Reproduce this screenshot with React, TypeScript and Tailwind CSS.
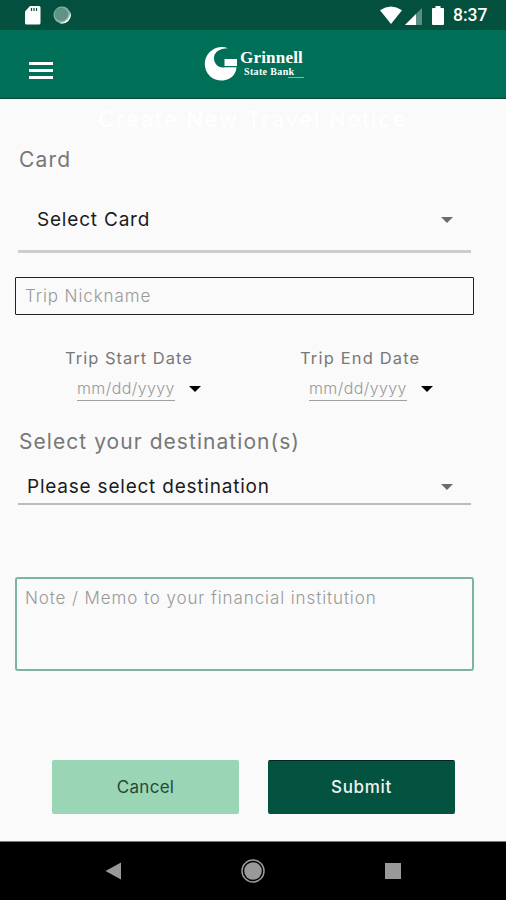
import React, { useState } from "react";

type SelectRowProps = {
    label: string;
    className: string;
};

type DateFieldProps = {
    label: string;
    className: string;
    labelClassName: string;
    value: string;
    onChange: (value: string) => void;
};

const Caret = ({ className }: { className: string }) => (
    <svg viewBox="0 0 12 6" className={`h-[6px] w-3 shrink-0 ${className}`} fill="currentColor">
        <path d="M0 0h12L6 6z" />
    </svg>
);

const StatusBar = () => (
    <div className="flex h-[30px] items-center bg-[#04503f] pl-6 pr-[18px] text-white">
        {/* SD card */}
        <svg viewBox="0 0 17 20" className="h-5 w-[17px]">
            <path d="M6 1h9q1.500 0 1.500 1.500v15.500q0 1.500-1.500 1.500h-12.500q-1.500 0-1.500-1.500v-11.500z" fill="white" />
            <path d="M7.500 3v3M10 3v3M12.500 3v3" stroke="#04503f" strokeWidth="1.200" />
        </svg>
        <svg viewBox="0 0 18 18" className="ml-3 h-[18px] w-[18px]">
            <circle cx="9" cy="9" r="8.500" fill="#8db5a9" />
            <path d="M17.300 6a8.600 8.600 0 0 1-11 11A11 11 0 0 0 17.300 6z" fill="white" />
            <circle cx="8.300" cy="8.300" r="6.800" fill="#5f9485" />
        </svg>
        <svg viewBox="0 0 22 18" className="ml-auto h-[18px] w-[22px]" fill="white">
            <path d="M0 4.200Q11-3.200 22 4.200L11 18z" />
        </svg>
        <svg viewBox="0 0 17 17" className="ml-[3px] mt-[2px] h-[17px] w-[17px]" fill="white">
            <path d="M17 0v17H0z" fillOpacity="0.350" />
            <path d="M11 6v11H0z" />
        </svg>
        <svg viewBox="0 0 12 19" className="ml-[10px] h-[19px] w-3" fill="white">
            <path d="M3.500 0h5v2H11q1 0 1 1v15q0 1-1 1H1q-1 0-1-1V3q0-1 1-1h2.500z" />
        </svg>
        <span className="ml-[9px] mt-[2px] w-[35px] whitespace-nowrap font-[Roboto] text-[17.500px] font-medium leading-none">
            8:37
        </span>
    </div>
);

const Logo = () => (
    <div className="flex items-start text-white">
        <svg viewBox="0 0 34 34" className="h-[34px] w-[34px]" fill="white">
            <path d="M24 1.200C19-.500 13-.500 8 3.200C-1 9.500-1.500 22 6 29.200c8 7 20 5 24.500-2.500 1.200-2 1.800-4 2-6.500H21c-6 1.500-11-3-11-9.200C10 5.500 15 1.200 24 1.200z" />
            <path d="M20.500 12H33v7H20.500z" />
        </svg>
        <div className="ml-[2px] mt-[2px] w-[64px] whitespace-nowrap font-['Liberation_Serif',serif] font-bold">
            <div className="text-[17px] leading-[17px] tracking-[0.200px]">Grinnell</div>
            <div className="mt-px pl-1 text-[10px] leading-[10px] tracking-[0.350px]">State Bank</div>
            <div className="ml-auto h-px w-4 bg-white/50" />
        </div>
    </div>
);

const SelectRow = ({ label, className }: SelectRowProps) => (
    <button type="button" className={`flex w-[453px] items-center justify-between pr-[18px] text-left text-[19px] text-[#1c1c1c] ${className}`}>
        {label}
        <Caret className="text-[#6b6b6b]" />
    </button>
);

const DateField = ({ label, className, labelClassName, value, onChange }: DateFieldProps) => (
    <label className={`flex flex-col ${className}`}>
        <span className={`text-[16.500px] leading-5 text-[#787878] ${labelClassName}`}>{label}</span>
        <span className="mt-2 flex items-center">
            <input
                value={value}
                onChange={(e) => onChange(e.target.value)}
                placeholder="mm/dd/yyyy"
                className="h-[25px] w-[98px] border-b-[1.500px] border-[#a0a0a0] pb-px text-[16px] font-light tracking-[0.400px] outline-none placeholder:text-[#999]"
            />
            <Caret className="ml-[14px] text-black" />
        </span>
    </label>
);

const App = () => {
    const [nickname, setNickname] = useState("");
    const [startDate, setStartDate] = useState("");
    const [endDate, setEndDate] = useState("");
    const [memo, setMemo] = useState("");

    return (
        <div className="flex h-[900px] w-[506px] flex-col overflow-hidden bg-[#fafafa] font-[Inter,sans-serif]">
            <StatusBar />

            <header className="flex h-[69px] items-start border-b border-[#08472f] bg-[#006f57]">
                <button type="button" aria-label="Menu" className="ml-[29px] mt-8 flex w-6 flex-col gap-1">
                    <span className="h-[3px] bg-white" />
                    <span className="h-[3px] bg-white" />
                    <span className="h-[3px] bg-white" />
                </button>
                <div className="ml-[151px] mt-[17px]">
                    <Logo />
                </div>
            </header>

            <main className="flex flex-1 flex-col">
                <h1 className="mt-2 text-center text-[22px] leading-6 tracking-[1.800px] text-white">
                    Create New Travel Notice
                </h1>

                <h2 className="ml-[19px] mt-4 text-[21px] leading-[26px] tracking-[1.200px] text-[#777]">Card</h2>
                <SelectRow label="Select Card" className="ml-[18px] mt-[14px] h-[66px] border-b-[3px] border-[#cdcdcd] pl-[19px] pt-[3px] tracking-[0.800px]" />

                <input
                    value={nickname}
                    onChange={(e) => setNickname(e.target.value)}
                    placeholder="Trip Nickname"
                    className="ml-[15px] mt-6 h-[38px] w-[459px] rounded-[1px] border-[1.500px] border-[#222] px-[9px] text-[17px] font-light tracking-[0.900px] outline-none placeholder:text-[#999]"
                />

                <div className="mt-[33px] flex">
                    <DateField
                        label="Trip Start Date"
                        className="ml-[77px]"
                        labelClassName="-ml-3 tracking-[1px]"
                        value={startDate}
                        onChange={setStartDate}
                    />
                    <DateField
                        label="Trip End Date"
                        className="ml-[108px]"
                        labelClassName="-ml-[9px] tracking-[1.150px]"
                        value={endDate}
                        onChange={setEndDate}
                    />
                </div>

                <h2 className="ml-[19px] mt-7 text-[21px] leading-[26px] tracking-[1.050px] text-[#777]">
                    Select your destination(s)
                </h2>
                <SelectRow
                    label="Please select destination"
                    className="ml-[18px] mt-[13px] h-[37px] border-b-2 border-[#bdbdbd] pl-[9px] pt-[3px] tracking-[0.780px]"
                />

                <textarea
                    value={memo}
                    onChange={(e) => setMemo(e.target.value)}
                    placeholder="Note / Memo to your financial institution"
                    className="ml-[15px] mt-[72px] h-[94px] w-[459px] resize-none rounded-[3px] border-2 border-[#7cb49f] px-2 py-[7px] text-[17px] font-light leading-6 tracking-[0.900px] outline-none placeholder:text-[#999]"
                />

                <div className="ml-[52px] mt-[89px] flex gap-[29px]">
                    <button type="button" className="h-[54px] w-[187px] rounded-[2px] bg-[#9ad5b5] pt-px text-[17px] tracking-[0.300px] text-[#244a3a]">
                        Cancel
                    </button>
                    <button type="button" className="h-[54px] w-[187px] rounded-[2px] border-t border-[#02291f] bg-[#045240] text-[17px] font-medium tracking-[0.700px] text-[#eef5f2]">
                        Submit
                    </button>
                </div>
            </main>

            {/* Android navigation */}
            <nav className="flex h-[59px] items-center border-t border-[#777] bg-black text-[#999]">
                <svg viewBox="0 0 16 18" className="ml-[105px] h-[18px] w-4" fill="currentColor">
                    <path d="M16 .500v17L.500 9z" />
                </svg>
                <svg viewBox="0 0 24 24" className="ml-[120px] h-6 w-6">
                    <circle cx="12" cy="12" r="11" fill="none" stroke="currentColor" strokeWidth="1.500" />
                    <circle cx="12" cy="12" r="8.800" fill="currentColor" />
                </svg>
                <span className="ml-[120px] h-4 w-4 bg-[#999]" />
            </nav>
        </div>
    );
};

export default App;
